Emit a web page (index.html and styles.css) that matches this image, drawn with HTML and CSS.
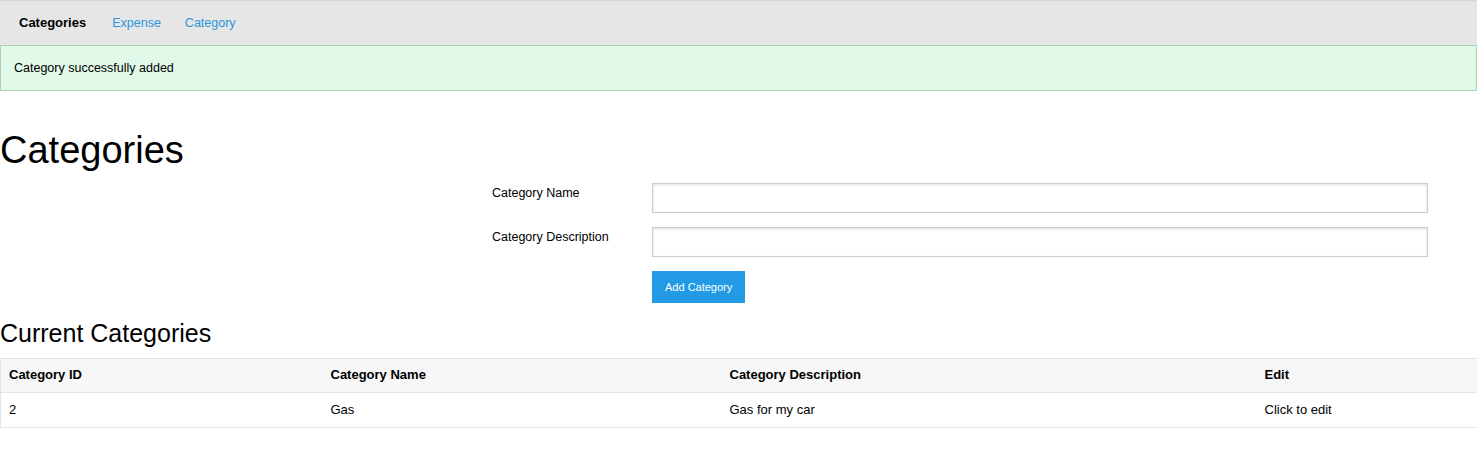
FILE: index.html
```html
<!DOCTYPE html>
<html>
<head>
<meta charset="utf-8">
<title>Categories</title>
<link rel="stylesheet" href="styles.css">
</head>
<body>
<nav class="menu">
  <span class="menu-heading">Categories</span>
  <a class="menu-link" href="#">Expense</a>
  <a class="menu-link" href="#">Category</a>
</nav>
<div class="alert">Category successfully added</div>
<h1 class="title">Categories</h1>
<form class="form">
  <div class="control">
    <label class="label">Category Name</label>
    <input class="input" type="text">
  </div>
  <div class="control">
    <label class="label">Category Description</label>
    <input class="input" type="text">
  </div>
  <div class="actions">
    <button class="button" type="button">Add Category</button>
  </div>
</form>
<h2 class="subtitle">Current Categories</h2>
<table class="table">
  <colgroup>
    <col class="c1"><col class="c2"><col class="c3"><col class="c4">
  </colgroup>
  <thead>
    <tr><th>Category ID</th><th>Category Name</th><th>Category Description</th><th>Edit</th></tr>
  </thead>
  <tbody>
    <tr><td>2</td><td>Gas</td><td>Gas for my car</td><td>Click to edit</td></tr>
  </tbody>
</table>
</body>
</html>
```
FILE: styles.css
```css
html, body {
  margin: 0;
  padding: 0;
  background: #fff;
  color: #000;
  font-family: "Liberation Sans", Arial, sans-serif;
  font-size: 13px;
}
.menu {
  display: flex;
  align-items: center;
  background: #e6e6e6;
  border-top: 1px solid #d6d6d6;
  padding-left: 19px;
  padding-bottom: 1px;
  box-sizing: border-box;
  height: 45px;
}
.menu-heading {
  font-weight: bold;
  margin-right: 26px;
}
.menu-link {
  color: #2a95db;
  text-decoration: none;
  font-size: 12.5px;
  margin-right: 24px;
}
.alert {
  box-sizing: border-box;
  height: 46px;
  background: #e0f9e9;
  border: 1px solid #b3cdbd;
  padding: 0 13px;
  display: flex;
  align-items: center;
  font-size: 12.5px;
}
.title {
  font-size: 38px;
  font-weight: normal;
  line-height: 44px;
  margin: 37px 0 11px 0;
}
.form {
  margin-left: 492px;
  width: 936px;
}
.control {
  display: flex;
  align-items: flex-start;
  margin-bottom: 14px;
}
.label {
  width: 160px;
  flex: none;
  line-height: 15px;
  padding-top: 3px;
  font-size: 12.5px;
}
.input {
  box-sizing: border-box;
  flex: 1;
  height: 30px;
  margin: 0;
  border: 1px solid #cccccc;
  box-shadow: inset 0 1px 3px #ddd;
  border-radius: 0;
  background: #fff;
}
.actions {
  padding-left: 160px;
}
.button {
  height: 32px;
  padding: 0 13px;
  border: none;
  background: #229ae6;
  color: #fff;
  font-family: "Liberation Sans", Arial, sans-serif;
  font-size: 11px;
  margin: 0;
}
.subtitle {
  font-size: 25px;
  font-weight: normal;
  line-height: 30px;
  margin: 15px 0 10px 0;
}
.table {
  width: 100%;
  border-collapse: collapse;
  table-layout: fixed;
  border: 1px solid #e4e4e4;
  border-right: none;
}
.c1 { width: 322px; }
.c2 { width: 399px; }
.c3 { width: 535px; }
.c4 { width: auto; }
.table th, .table td {
  text-align: left;
  padding: 9px 8px;
  line-height: 15px;
  font-size: 13px;
}
.table tbody td {
  padding-bottom: 10px;
}
.table thead {
  background: #f7f7f7;
}
.table thead th {
  border-bottom: 1px solid #e4e4e4;
  padding-top: 8px;
  padding-bottom: 10px;
}
```
